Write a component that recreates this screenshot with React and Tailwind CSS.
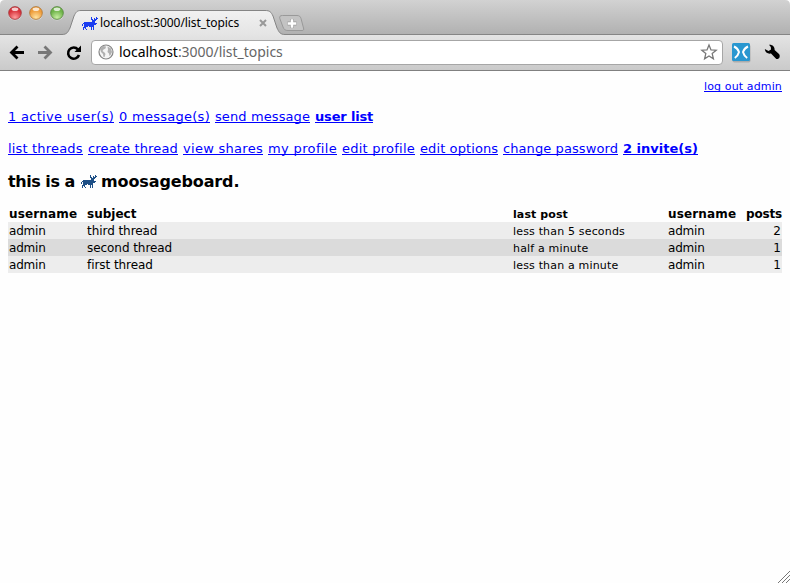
import React from 'react';

const MOOSE = [
  '.........#....#.',
  '.........#..#.##',
  '.........##.###.',
  '..........####..',
  '..........###...',
  '..###########...',
  '.##############.',
  '#.############..',
  '#.##########....',
  '..####.#####....',
  '.###.....#.#....',
  '.#.#.....#.#....',
  '.#..#....#.#....',
];

function Moose({ color }) {
  const d = MOOSE.map((row, y) =>
    [...row].map((c, x) => (c === '#' ? `M${x} ${y}h1v1h-1z` : '')).join('')
  ).join('');
  return (
    <svg width="16" height="13" viewBox="0 0 16 13" shapeRendering="crispEdges" className="block shrink-0">
      <path d={d} fill={color} />
    </svg>
  );
}

function Lights() {
  const lights = [
    [15, '#d8333b', '#ff9d9d', '#8f2a2e'],
    [36, '#ee9d3c', '#ffe3a0', '#9a6428'],
    [57, '#6fb44a', '#c8eea2', '#44722f'],
  ];
  return (
    <svg width="66" height="26" viewBox="0 0 66 26" className="block">
      <defs>
        {lights.map(([x, a, b]) => (
          <radialGradient key={x} id={`g${x}`} cx="0.5" cy="0.85" r="0.75">
            <stop offset="0" stopColor={b} />
            <stop offset="0.75" stopColor={a} />
          </radialGradient>
        ))}
      </defs>
      {lights.map(([x, , , s]) => (
        <g key={x}>
          <circle cx={x} cy="13.6" r="7" fill="#fff" opacity="0.4" />
          <circle cx={x} cy="13" r="6.4" fill={`url(#g${x})`} stroke={s} strokeOpacity="0.75" strokeWidth="0.9" />
          <ellipse cx={x} cy="9.3" rx="3.3" ry="1.8" fill="#fff" opacity="0.75" />
        </g>
      ))}
    </svg>
  );
}

function TabStrip() {
  return (
    <div className="relative h-[35px] bg-linear-to-b from-[#d2d2d2] to-[#b0b0b0]">
      <svg width="790" height="35" viewBox="0 0 790 35" className="absolute inset-0">
        <defs>
          <linearGradient id="tab" x1="0" y1="0" x2="0" y2="1">
            <stop offset="0" stopColor="#f1f1f1" />
            <stop offset="1" stopColor="#e4e4e4" />
          </linearGradient>
        </defs>
        <path d="M0 0H5Q0 0 0 5zM790 0H785Q790 0 790 5z" fill="#fff" />
        <path d="M0 34.5H62C67 34.5 68 32 70 28L74 16C76 12 77 10.500 81 10.500H265C270 10.500 271 12 273 16L277 28C279 32 280 34.500 285 34.500H790V36H0z" fill="url(#tab)" stroke="#858585" />
        <path d="M282.500 15.500H297C299.500 15.500 300.300 16.500 301 18.500L303.500 28C304 30 303.500 30.500 302 30.500H288C285 30.500 284 29.500 283 27L279.800 18.500C279.300 16.500 280 15.500 282.500 15.500z" fill="#c3c3c3" stroke="#999" />
        <path d="M292 19v9M287.500 23.500h9" stroke="#999" strokeWidth="4" />
        <path d="M292 19.300v8.400M287.800 23.500h8.400" stroke="#fff" strokeWidth="2.600" />
        <path d="M260 20l6 6M266 20l-6 6" stroke="#999" strokeWidth="2" />
      </svg>
      <div className="relative flex h-full">
        <Lights />
        <div className="flex pl-[16px] pt-[17px]">
          <Moose color="#1a3cf0" />
          <span className="-mt-[2px] pl-[2px] font-['Noto_Sans',sans-serif] text-[12px] leading-[16px] tracking-[-0.07px] text-black">localhost:3000/list_topics</span>
        </div>
      </div>
    </div>
  );
}

function Toolbar() {
  return (
    <div className="flex h-[36px] items-center border-b border-[#808080] bg-linear-to-b from-[#e4e4e4] to-[#cacaca]">
      <svg width="91" height="35" viewBox="0 0 91 35" className="block shrink-0" fill="none">
        <path d="M24 17.500H12M17.500 11.500L11.500 17.500L17.500 23.500" stroke="#000" strokeWidth="2.800" />
        <path d="M38 17.500H50M44.500 11.500L50.500 17.500L44.500 23.500" stroke="#777" strokeWidth="2.800" />
        <path d="M78 14.500A5.600 5.600 0 1 0 79 20" stroke="#000" strokeWidth="2.600" />
        <path d="M81 10.500V17H74.500z" fill="#000" />
      </svg>
      <div className="flex h-[25px] w-[632px] items-center rounded-[4px] border border-[#a6a6a6] bg-white pb-[1px]">
        <svg width="16" height="16" viewBox="0 0 16 16" className="ml-[6px] shrink-0">
          <circle cx="8" cy="8" r="7" fill="#f4f4f4" stroke="#858585" strokeWidth="1.200" />
          <path d="M2 5L5 2L8 2.500L7.500 4.500L5.500 5.500L4.500 7L6.500 8.500L7.500 10L6.500 13L5.500 13L5 10L3 8zM9.500 2.500L13 4.500L14 8L12.500 11L11.500 12L11 9.500L9.500 8L10 5.500z" fill="#b0b0b0" />
        </svg>
        <span className="pl-[5px] font-['Noto_Sans',sans-serif] text-[14px] leading-[20px] tracking-[-0.03px] text-[#666]"><span className="text-black">localhost</span>:3000/list_topics</span>
        <svg width="18" height="18" viewBox="0 0 18 18" className="ml-auto mr-[4px] shrink-0" fill="#fff">
          <path d="M9 2L11 6.900L16.200 7.200L12.200 10.600L13.400 15.800L9 13L4.600 15.800L5.800 10.600L1.800 7.200L7 6.900z" stroke="#777" strokeWidth="1.300" />
        </svg>
      </div>
      <svg width="67" height="35" viewBox="0 0 67 35" className="block shrink-0">
        <rect x="9.500" y="9.500" width="18" height="18" rx="2" fill="#888" opacity="0.5" />
        <rect x="9" y="8" width="18" height="18" rx="1.500" fill="#2997d0" />
        <path d="M11 11.500Q14.500 13 16 17Q15 21 11.800 23M25 11.500Q21.500 13 20 17Q21 21 24.200 23" fill="none" stroke="#fff" strokeWidth="2" />
        <path d="M46 9.700C49 9.200 52 11.500 51.600 15L56 19C57.600 20.800 56.600 24.500 53.300 24L48 18.500C45 19.200 42 17.500 41.800 14L45.500 16L48 14.500L47.800 12z" fill="#000" />
      </svg>
    </div>
  );
}

const STATUS = [
  ['1 active user(s)', 'w-[106px] tracking-[0.3px]'],
  ['0 message(s)', 'w-[91px] tracking-[0.27px]'],
  ['send message', 'w-[95px] tracking-[0.1px]'],
  ['user list', 'w-[58px] font-bold tracking-[-0.17px]'],
];

const NAV = [
  ['list threads', 'w-[75px] tracking-[0.17px]'],
  ['create thread', 'w-[90px] tracking-[0.15px]'],
  ['view shares', 'w-[80px] tracking-[0.29px]'],
  ['my profile', 'w-[69px] tracking-[0.36px]'],
  ['edit profile', 'w-[73px] tracking-[0.24px]'],
  ['edit options', 'w-[78px] tracking-[0.1px]'],
  ['change password', 'w-[115px] tracking-[0.09px]'],
  ['2 invite(s)', 'w-[75px] font-bold'],
];

function Links({ items }) {
  return (
    <div className="flex gap-[5px] text-[13px] leading-[16px] text-[#0000ff]">
      {items.map(([label, cls]) => (
        <a key={label} className={`block h-[14px] whitespace-nowrap border-b border-[#0000ff] ${cls}`}>{label}</a>
      ))}
    </div>
  );
}

const ROWS = [
  ['third thread', 'less than 5 seconds', '2', 'bg-[#ededed]'],
  ['second thread', 'half a minute', '1', 'bg-[#dbdbdb]'],
  ['first thread', 'less than a minute', '1', 'bg-[#ededed]'],
];

const GRID = 'grid h-[17px] grid-cols-[78px_426px_155px_78px_1fr] pl-px pr-px text-[12px] leading-[19px] whitespace-nowrap';

export default function App() {
  return (
    <div className="h-[583px] w-[790px] overflow-hidden bg-[#fefefe] font-['DejaVu_Sans',Verdana,sans-serif] text-black">
      <TabStrip />
      <Toolbar />
      <div className="relative flex h-[512px] flex-col px-[8px] pt-[8px]">
        <a className="block h-[13px] w-[78px] self-end whitespace-nowrap border-b border-[#0000ff] text-[11px] leading-[16px] tracking-[0.13px] text-[#0000ff]">log out admin</a>
        <div className="mt-[17px]"><Links items={STATUS} /></div>
        <div className="mt-[18px]"><Links items={NAV} /></div>
        <h1 className="mt-[17px] flex h-[20px] items-center text-[16px] font-bold leading-[20px]">
          <span className="w-[73px] tracking-[-0.45px]">this is a</span>
          <span className="pb-[1px]"><Moose color="#1d4f86" /></span>
          <span className="pl-[4px] tracking-[-0.12px]">moosageboard.</span>
        </h1>
        <div className="mt-[13px]">
          <div className={`${GRID} font-bold`}>
            <span className="tracking-[0.15px]">username</span>
            <span>subject</span>
            <span className="text-[11px] tracking-[0.1px]">last post</span>
            <span className="tracking-[0.15px]">username</span>
            <span className="text-right tracking-[-0.2px]">posts</span>
          </div>
          {ROWS.map(([subject, when, posts, bg]) => (
            <div key={subject} className={`${GRID} ${bg}`}>
              <span className="tracking-[-0.2px]">admin</span>
              <span className="tracking-[-0.06px]">{subject}</span>
              <span className="text-[11px] tracking-[0.17px]">{when}</span>
              <span className="tracking-[-0.2px]">admin</span>
              <span className="text-right">{posts}</span>
            </div>
          ))}
        </div>
        <svg width="12" height="12" viewBox="0 0 12 12" className="absolute bottom-0 right-0" stroke="#777" fill="none">
          <path d="M0 12L12 0M4 12L12 4M8 12L12 8" />
        </svg>
      </div>
    </div>
  );
}
